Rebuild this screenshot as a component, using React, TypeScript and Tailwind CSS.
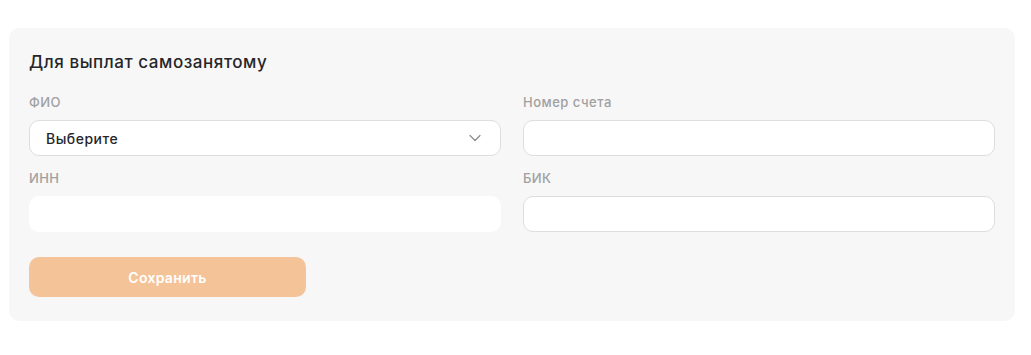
import React from "react";

const font = { fontFamily: "Inter, 'Noto Sans', sans-serif" };

export default function App() {
  return (
    <div className="w-[1031px] h-[355px] bg-white pt-[28px] pl-[9px]" style={font}>
      <div className="w-[1006px] h-[293px] bg-[#f7f7f7] rounded-[10px] px-[20px] pt-[22px]">
        <h2 className="text-[17px] leading-[24px] font-medium text-[#26262a] tracking-[0.55px]">Для выплат самозанятому</h2>
        <div className="grid grid-cols-2 gap-x-[22px] mt-[20px]">
          <div>
            <div className="text-[13px] leading-[16px] text-[#a0a0a0] font-medium tracking-[0.4px]">ФИО</div>
            <div className="mt-[10px] h-[36px] rounded-[10px] border border-[#dedede] bg-white flex items-center justify-between px-[16px]">
              <span className="text-[14px] font-medium text-[#26262a] tracking-[0.5px]">Выберите</span>
              <svg width="12" height="8" viewBox="0 0 12 8" fill="none" className="mr-[3px]">
                <path d="M1 1.5L6 6.5L11 1.5" stroke="#8a8a8a" strokeWidth="1.2" strokeLinecap="round" strokeLinejoin="round" />
              </svg>
            </div>
          </div>
          <div>
            <div className="text-[13px] leading-[16px] text-[#a0a0a0] font-medium tracking-[0.5px]">Номер счета</div>
            <div className="mt-[10px] h-[36px] rounded-[10px] border border-[#dedede] bg-white" />
          </div>
          <div className="mt-[14px]">
            <div className="text-[13px] leading-[16px] text-[#a0a0a0] font-medium tracking-[0.4px]">ИНН</div>
            <div className="mt-[10px] h-[36px] rounded-[10px] bg-white" />
          </div>
          <div className="mt-[14px]">
            <div className="text-[13px] leading-[16px] text-[#a0a0a0] font-medium tracking-[0.4px]">БИК</div>
            <div className="mt-[10px] h-[36px] rounded-[10px] border border-[#dedede] bg-white" />
          </div>
        </div>
        <button className="mt-[25px] w-[277px] h-[40px] rounded-[10px] bg-[#f5c398] text-white text-[14px] font-semibold tracking-[0.3px]">
          Сохранить
        </button>
      </div>
    </div>
  );
}
